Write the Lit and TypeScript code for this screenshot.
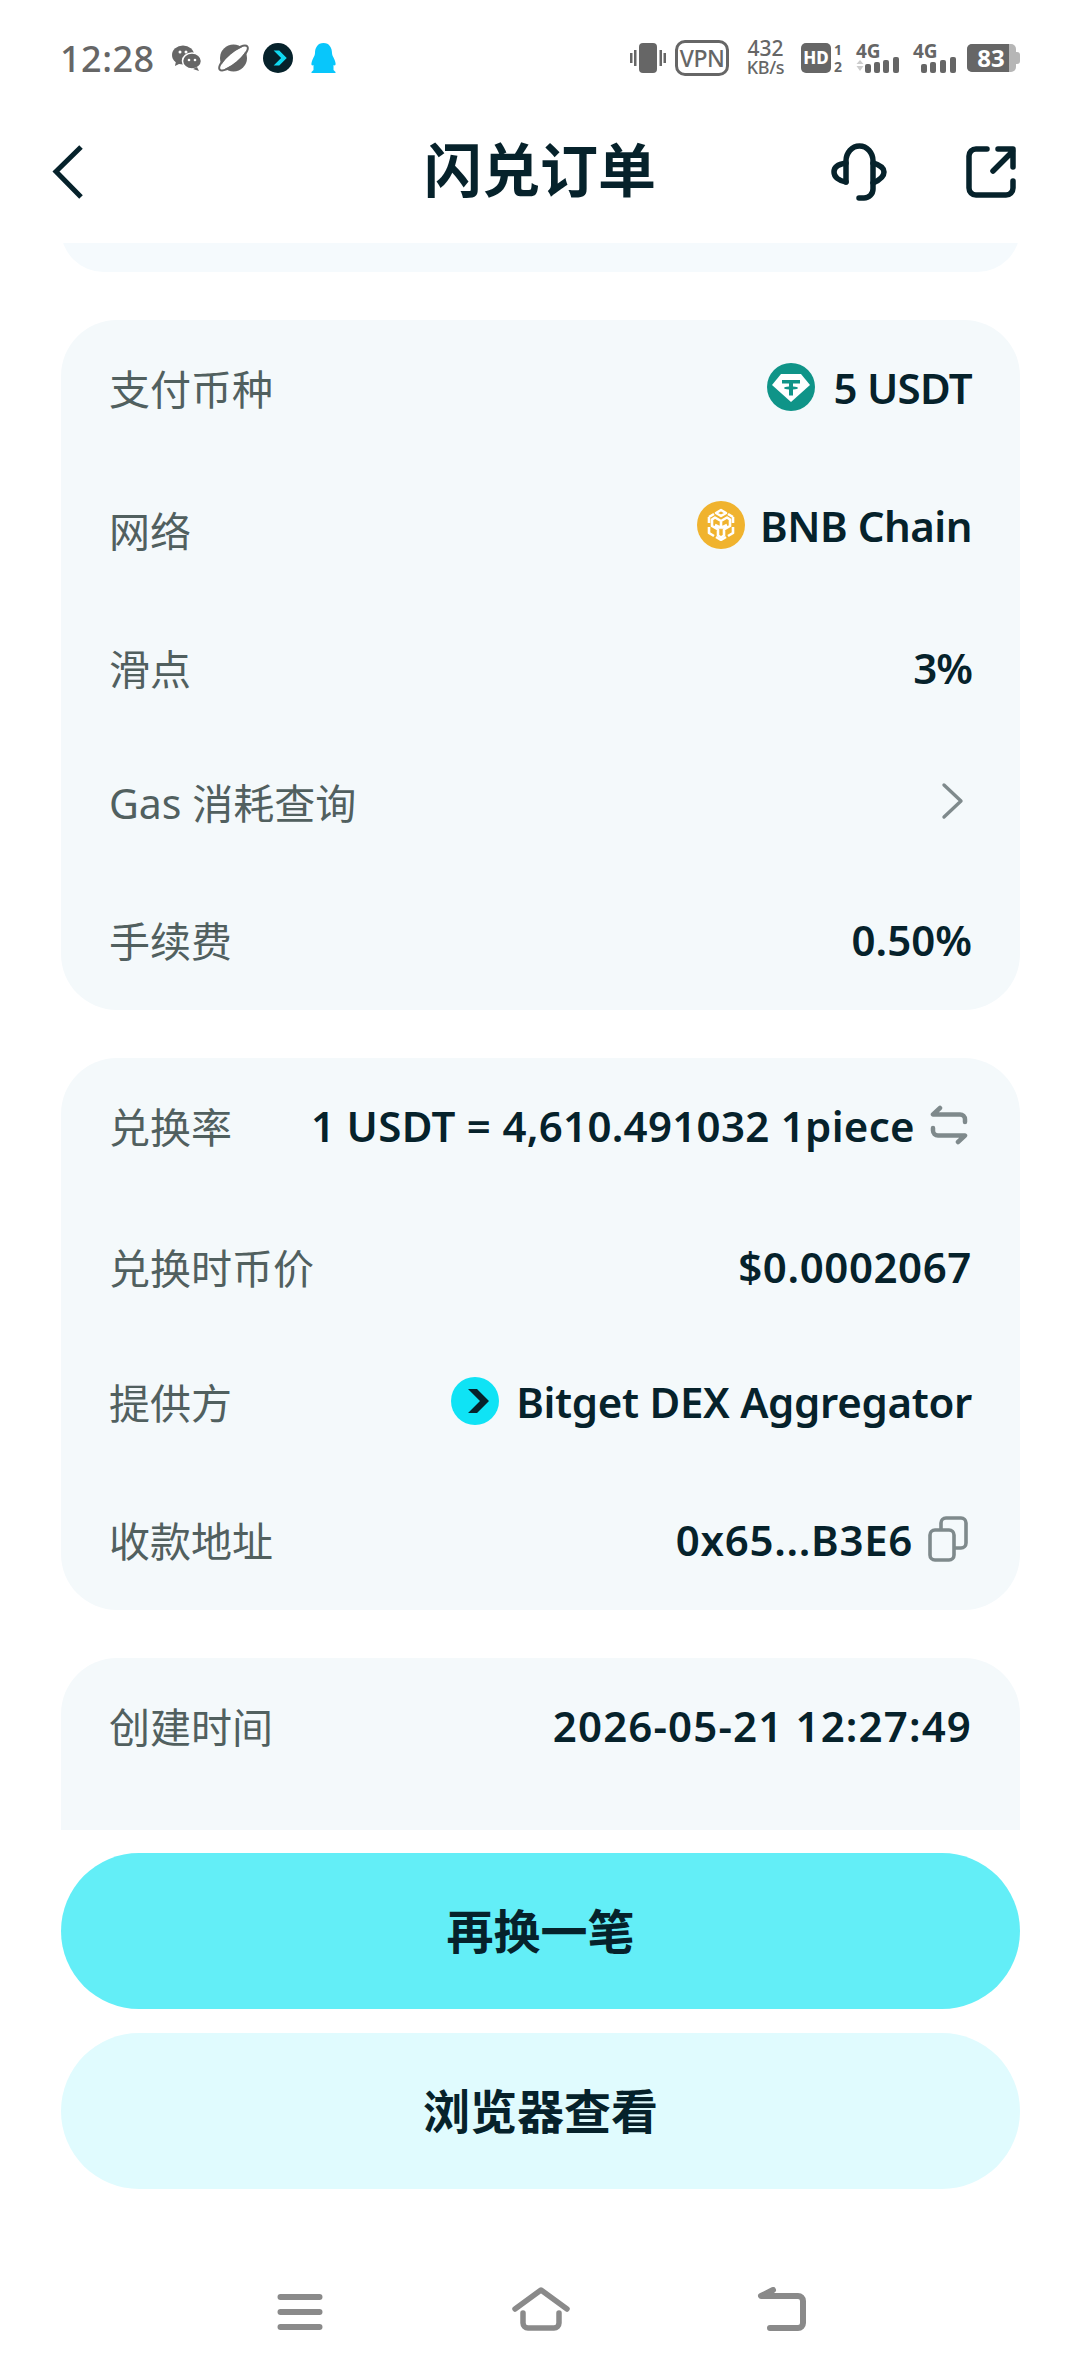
import { LitElement, html, css } from "lit";
import { customElement } from "lit/decorators.js";

const bitget = (bg: string, fg: string, size: number) => html`<svg width=${size} height=${size} viewBox="0 0 48 48"><circle cx="24" cy="24" r="24" fill=${bg}/><path d="M17 12h9l12 12-12 12h-9l12-12z" fill=${fg}/></svg>`;

const usdt = html`<svg width="48" height="48" viewBox="0 0 48 48"><circle cx="24" cy="24" r="24" fill="#0f9488"/><path d="M14 11h20l9 11-19 17L5 22z" fill="#fff"/><path d="M15 17h18v3.500h-7v3c3 .2 5 .8 5 1.500s-2 1.300-5 1.500v6h-4v-6c-3-.2-5-.8-5-1.500s2-1.300 5-1.500v-3h-7z" fill="#0f9488"/></svg>`;

const bnb = html`<svg width="48" height="48" viewBox="0 0 48 48"><circle cx="24" cy="24" r="24" fill="#f0b32e"/><g fill="none" stroke="#fff" stroke-width="2.600" stroke-linejoin="round"><path d="M24 9l5 3-5 3-5-3zM12 16l5-3M36 16l-5-3M12 16v6M36 16v6M12 26v6l5 3M36 26v6l-5 3M24 39l-5-3M24 39l5-3"/><path d="M24 20l6-3.500 3 2v6.500l-6 3.500v6l-3 2-3-2v-6l-6-3.500V18.500l3-2zM24 20v7M24 27l-6-3M24 27l6-3"/></g></svg>`;

const swap = html`<svg width="38" height="40" viewBox="0 0 38 40" fill="none" stroke="#7f8a8c" stroke-width="4.500" stroke-linecap="round" stroke-linejoin="round"><path d="M10 3L3 9.500h27a5 5 0 0 1 5 5V17M28 37l7-6.500H8a5 5 0 0 1-5-5V23"/></svg>`;

const copy = html`<svg width="40" height="46" viewBox="0 0 40 46" fill="none" stroke="#7f8a8c" stroke-width="3.600" stroke-linejoin="round"><rect x="2" y="14" width="24" height="30" rx="5"/><path d="M13 14V7a5 5 0 0 1 5-5h15a5 5 0 0 1 5 5v20a5 5 0 0 1-5 5h-7"/></svg>`;

const chevron = html`<svg width="24" height="38" viewBox="0 0 24 38" fill="none" stroke="#7f8a8c" stroke-width="3.400" stroke-linecap="round" stroke-linejoin="round"><path d="M3 3l17 16L3 35"/></svg>`;

type Row = { label: string; value: string; c: number; raise?: number; pre?: unknown; post?: unknown; gap?: number; postRight?: number; track?: number };
const ROW_H = 60;

const card1: Row[] = [
  { label: "支付币种", value: "5 USDT", c: 67, pre: usdt, track: -0.7 },
  { label: "网络", value: "BNB Chain", c: 209, raise: 8, pre: bnb, gap: 15, track: -0.5 },
  { label: "滑点", value: "3%", c: 347, track: -1 },
  { label: "Gas 消耗查询", value: "", c: 481, post: chevron, postRight: 7 },
  { label: "手续费", value: "0.50%", c: 619 },
];
const card2: Row[] = [
  { label: "兑换率", value: "1 USDT = 4,610.491032 1piece", c: 67, post: swap, postRight: 4, gap: 15, track: 0.3 },
  { label: "兑换时币价", value: "$0.0002067", c: 208, track: 0.6 },
  { label: "提供方", value: "Bitget DEX Aggregator", c: 343, pre: bitget("#0fe3f5", "#06222b", 48), gap: 17, track: -0.3 },
  { label: "收款地址", value: "0x65...B3E6", c: 481, post: copy, postRight: 4, gap: 15, track: 0.7 },
];
const card3: Row[] = [{ label: "创建时间", value: "2026-05-21 12:27:49", c: 67, track: 1.15 }];

@customElement("app-root")
export class AppRoot extends LitElement {
  static styles = css`
    :host { display: block; width: 1080px; height: 2376px; background: #fff; overflow: hidden;
      font-family: "Noto Sans", "Noto Sans CJK SC", sans-serif; color: #06222b; }
    .page { display: flex; flex-direction: column; height: 2376px; }
    .status { height: 116px; flex: none; display: flex; align-items: center; justify-content: space-between; padding: 0 60px; color: #666; }
    .status svg { overflow: visible; }
    .left, .right { display: flex; align-items: center; }
    .time { font-size: 36px; font-weight: 500; letter-spacing: 0.5px; }
    .ml9 { margin-left: 9px; } .ml10 { margin-left: 10px; } .ml12 { margin-left: 12px; } .ml13 { margin-left: 13px; }
    .ml14 { margin-left: 14px; } .ml15 { margin-left: 15px; } .ml16 { margin-left: 16px; } .ml17 { margin-left: 17px; }
    .vpn { width: 54px; height: 36px; border: 3px solid #666; border-radius: 10px; box-sizing: border-box; display: flex; align-items: center; justify-content: center; font-size: 23px; font-weight: 500; letter-spacing: -0.5px; }
    .speed { display: flex; flex-direction: column; align-items: center; line-height: 19px; font-size: 21px; font-weight: 500; width: 43px; }
    .speed small { font-size: 18px; font-weight: 500; letter-spacing: -0.3px; }
    .nav { height: 112px; flex: none; display: flex; align-items: center; position: relative; padding: 0 64px 0 52px; }
    .nav h1 { position: absolute; left: 0; right: 0; margin: 0; text-align: center; font-size: 58px; font-weight: 600; line-height: 108px; top: 0; }
    .actions { margin-left: auto; display: flex; align-items: center; gap: 79px; }
    .scroll { height: 1587px; flex: none; overflow: hidden; margin: 15px 60px 0 61px; display: flex; flex-direction: column; gap: 48px; }
    .scroll-top { height: 85px; flex: none; margin-top: -56px; background: #f5fafd; border-radius: 56px; }
    .card { background: #f4f9fb; border-radius: 56px; padding: 0 48px; flex: none; box-sizing: border-box; }
    .h1 { height: 690px; } .h2 { height: 552px; }
    .rows { display: flex; flex-direction: column; }
    .row { display: flex; align-items: center; justify-content: space-between; flex: none; }
    .label { font-size: 41px; color: #51605f; }
    .value { display: flex; align-items: center; gap: 18px; font-size: 42px; font-weight: 600; }
    .post { display: flex; }
    .last { height: 172px; border-radius: 56px 56px 0 0; }
    .buttons { flex: none; display: flex; flex-direction: column; gap: 24px; margin: 23px 60px 0 61px; }
    .btn { height: 156px; box-sizing: border-box; padding-bottom: 5px; border-radius: 78px; display: flex; align-items: center; justify-content: center; font-size: 47px; font-weight: 600; }
    .primary { background: #63eef7; }
    .secondary { background: #e0fbfe; }
    .sys { flex: 1; display: flex; align-items: flex-end; padding: 0 0 45px 277px; }
    .sys svg { flex: none; }
    .ml189 { margin-left: 189px; } .ml187 { margin-left: 187px; }
  `;

  private renderRows(rows: Row[]) {
    let prev = 0;
    return html`<div class="rows">
      ${rows.map((r, i) => {
        const top = r.c - ROW_H / 2 - (i === 0 ? 0 : prev + ROW_H / 2);
        prev = r.c;
        return html`<div class="row" style="height:${ROW_H}px;margin-top:${top}px">
          <span class="label">${r.label}</span>
          <span class="value" style="gap:${r.gap ?? 18}px;margin-bottom:${r.raise ?? 0}px;letter-spacing:${r.track ?? 0}px">
            ${r.pre}${r.value ? html`<span>${r.value}</span>` : ""}${r.post ? html`<span class="post" style="margin-right:${r.postRight ?? 0}px">${r.post}</span>` : ""}
          </span>
        </div>`;
      })}
    </div>`;
  }

  render() {
    return html`<div class="page">
      <div class="status">
        <div class="left">
          <span class="time">12:28</span>
          <svg class="ml17" width="30" height="26" viewBox="0 0 30 26"><ellipse cx="11" cy="10" rx="11" ry="9.500" fill="#666"/><path d="M4 16l-1 5 6-3z" fill="#666"/><ellipse cx="20" cy="16" rx="9.500" ry="8" fill="#666" stroke="#fff" stroke-width="1.500"/><path d="M25 22l2 4-6-2z" fill="#666"/><circle cx="8" cy="7" r="1.500" fill="#fff"/><circle cx="14" cy="7" r="1.500" fill="#fff"/><circle cx="17" cy="15" r="1.300" fill="#fff"/><circle cx="23" cy="15" r="1.300" fill="#fff"/></svg>
          <svg class="ml16" width="31" height="28" viewBox="0 0 31 28"><circle cx="15.500" cy="14" r="13.500" fill="#666"/><g transform="rotate(-40 15.500 14)"><ellipse cx="15.500" cy="14" rx="16" ry="4.500" fill="#fff"/><ellipse cx="15.500" cy="14" rx="18" ry="6" fill="none" stroke="#666" stroke-width="2"/></g></svg>
          <span class="ml14" style="display:flex">${bitget("#06222b", "#10d8f0", 30)}</span>
          <svg class="ml17" width="27" height="30" viewBox="0 0 26 30"><path d="M13 0c6 0 8.500 5 8.500 10 0 3 2.500 5 3.500 10 .5 2.500-1 3-2 2v5l2 2v1H1v-1l2-2v-5c-1 1-2.500.5-2-2 1-5 3.500-7 3.500-10C4.500 5 7 0 13 0z" fill="#08c6fb"/></svg>
        </div>
        <div class="right">
          <svg width="36" height="32" viewBox="0 0 36 32" fill="#666"><rect x="9" y="1" width="18" height="30" rx="4"/><rect x="0" y="11" width="2.500" height="10"/><rect x="4" y="8" width="2.500" height="16"/><rect x="29.500" y="8" width="2.500" height="16"/><rect x="33.500" y="11" width="2.500" height="10"/></svg>
          <span class="vpn ml9">VPN</span>
          <span class="speed ml15"><span>432</span><small>KB/s</small></span>
          <svg class="ml14" width="42" height="32" viewBox="0 0 42 32"><rect width="30" height="30" y="1" rx="5" fill="#666"/><text x="15" y="22" text-anchor="middle" font-size="17" font-weight="800" fill="#fff" font-family="Noto Sans">HD</text><text x="37" y="13" text-anchor="middle" font-size="14" font-weight="700" fill="#666" font-family="Noto Sans">1</text><text x="37" y="30" text-anchor="middle" font-size="14" font-weight="700" fill="#666" font-family="Noto Sans">2</text></svg>
          <svg class="ml12" width="44" height="32" viewBox="0 0 44 32"><text x="1" y="16" font-size="19" font-weight="700" fill="#666" font-family="Noto Sans">4G</text><path d="M5 18l3.500 4h-7zM1.500 24h7L5 29z" fill="#ccc"/><rect x="10" y="22" width="6" height="9" rx="2" fill="#666"/><rect x="19" y="20" width="6" height="11" rx="2" fill="#666"/><rect x="28" y="18" width="6" height="13" rx="2" fill="#666"/><rect x="38" y="15" width="6" height="16" rx="2" fill="#666"/></svg>
          <svg class="ml13" width="45" height="32" viewBox="0 0 45 32"><text x="1" y="16" font-size="19" font-weight="700" fill="#666" font-family="Noto Sans">4G</text><rect x="9" y="22" width="6" height="9" rx="2" fill="#666"/><rect x="18" y="20" width="6" height="11" rx="2" fill="#666"/><rect x="28" y="18" width="6" height="13" rx="2" fill="#666"/><rect x="38" y="15" width="6" height="16" rx="2" fill="#666"/></svg>
          <svg class="ml10" width="53" height="28" viewBox="0 0 53 28"><rect width="49" height="28" rx="5" fill="#b6b6b6"/><path d="M5 0h37v28H5a5 5 0 0 1-5-5V5a5 5 0 0 1 5-5z" fill="#666"/><path d="M49 8h1a3 3 0 0 1 3 3v6a3 3 0 0 1-3 3h-1z" fill="#b6b6b6"/><text x="24" y="22.500" text-anchor="middle" font-size="24" font-weight="700" fill="#fff" font-family="Noto Sans">83</text></svg>
        </div>
      </div>

      <div class="nav">
        <svg width="32" height="56" viewBox="0 0 32 56" fill="none" stroke="#06222b" stroke-width="5"><path d="M29 3L4 27.500 29 53"/></svg>
        <h1>闪兑订单</h1>
        <div class="actions">
          <svg width="56" height="58" viewBox="0 0 56 58" fill="none" stroke="#06222b" stroke-width="5.500" stroke-linecap="round"><path d="M15 39V18a13.500 15 0 0 1 27 0v28a9 9 0 0 1-9 9h-5"/><path d="M15 20c-7 1-12 4-12 9s5 9 12 10M42 20c7 2 11 5 11 9s-4 8-11 11"/></svg>
          <svg width="50" height="52" viewBox="0 0 50 52" fill="none" stroke="#06222b" stroke-width="5.500" stroke-linecap="round" stroke-linejoin="round"><path d="M21 3H10a7 7 0 0 0-7 7v32a7 7 0 0 0 7 7h30a7 7 0 0 0 7-7V35"/><path d="M27 25L47 5M32 3h15v18"/></svg>
        </div>
      </div>

      <div class="scroll">
        <div class="scroll-top"></div>
        <div class="card h1">${this.renderRows(card1)}</div>
        <div class="card h2">${this.renderRows(card2)}</div>
        <div class="card last">${this.renderRows(card3)}</div>
      </div>

      <div class="buttons">
        <div class="btn primary">再换一笔</div>
        <div class="btn secondary">浏览器查看</div>
      </div>

      <div class="sys">
        <svg width="46" height="38" viewBox="0 0 46 38" fill="none" stroke="#8a8a8a" stroke-width="6" stroke-linecap="round"><path d="M3.500 4h39M3.500 19h39M3.500 34h39"/></svg>
        <svg class="ml189" width="58" height="44" viewBox="0 0 58 44" fill="none" stroke="#8a8a8a" stroke-width="5.500" stroke-linecap="round" stroke-linejoin="round"><path d="M3 22L29 3l26 19"/><path d="M11 26v10a5 5 0 0 0 5 5h26a5 5 0 0 0 5-5V26"/></svg>
        <svg class="ml187" width="50" height="44" viewBox="0 0 50 44" fill="none" stroke="#8a8a8a" stroke-width="6" stroke-linecap="round" stroke-linejoin="round"><path d="M16 3L4 9h37a5 5 0 0 1 5 5v22a5 5 0 0 1-5 5H13"/></svg>
      </div>
    </div>`;
  }
}
